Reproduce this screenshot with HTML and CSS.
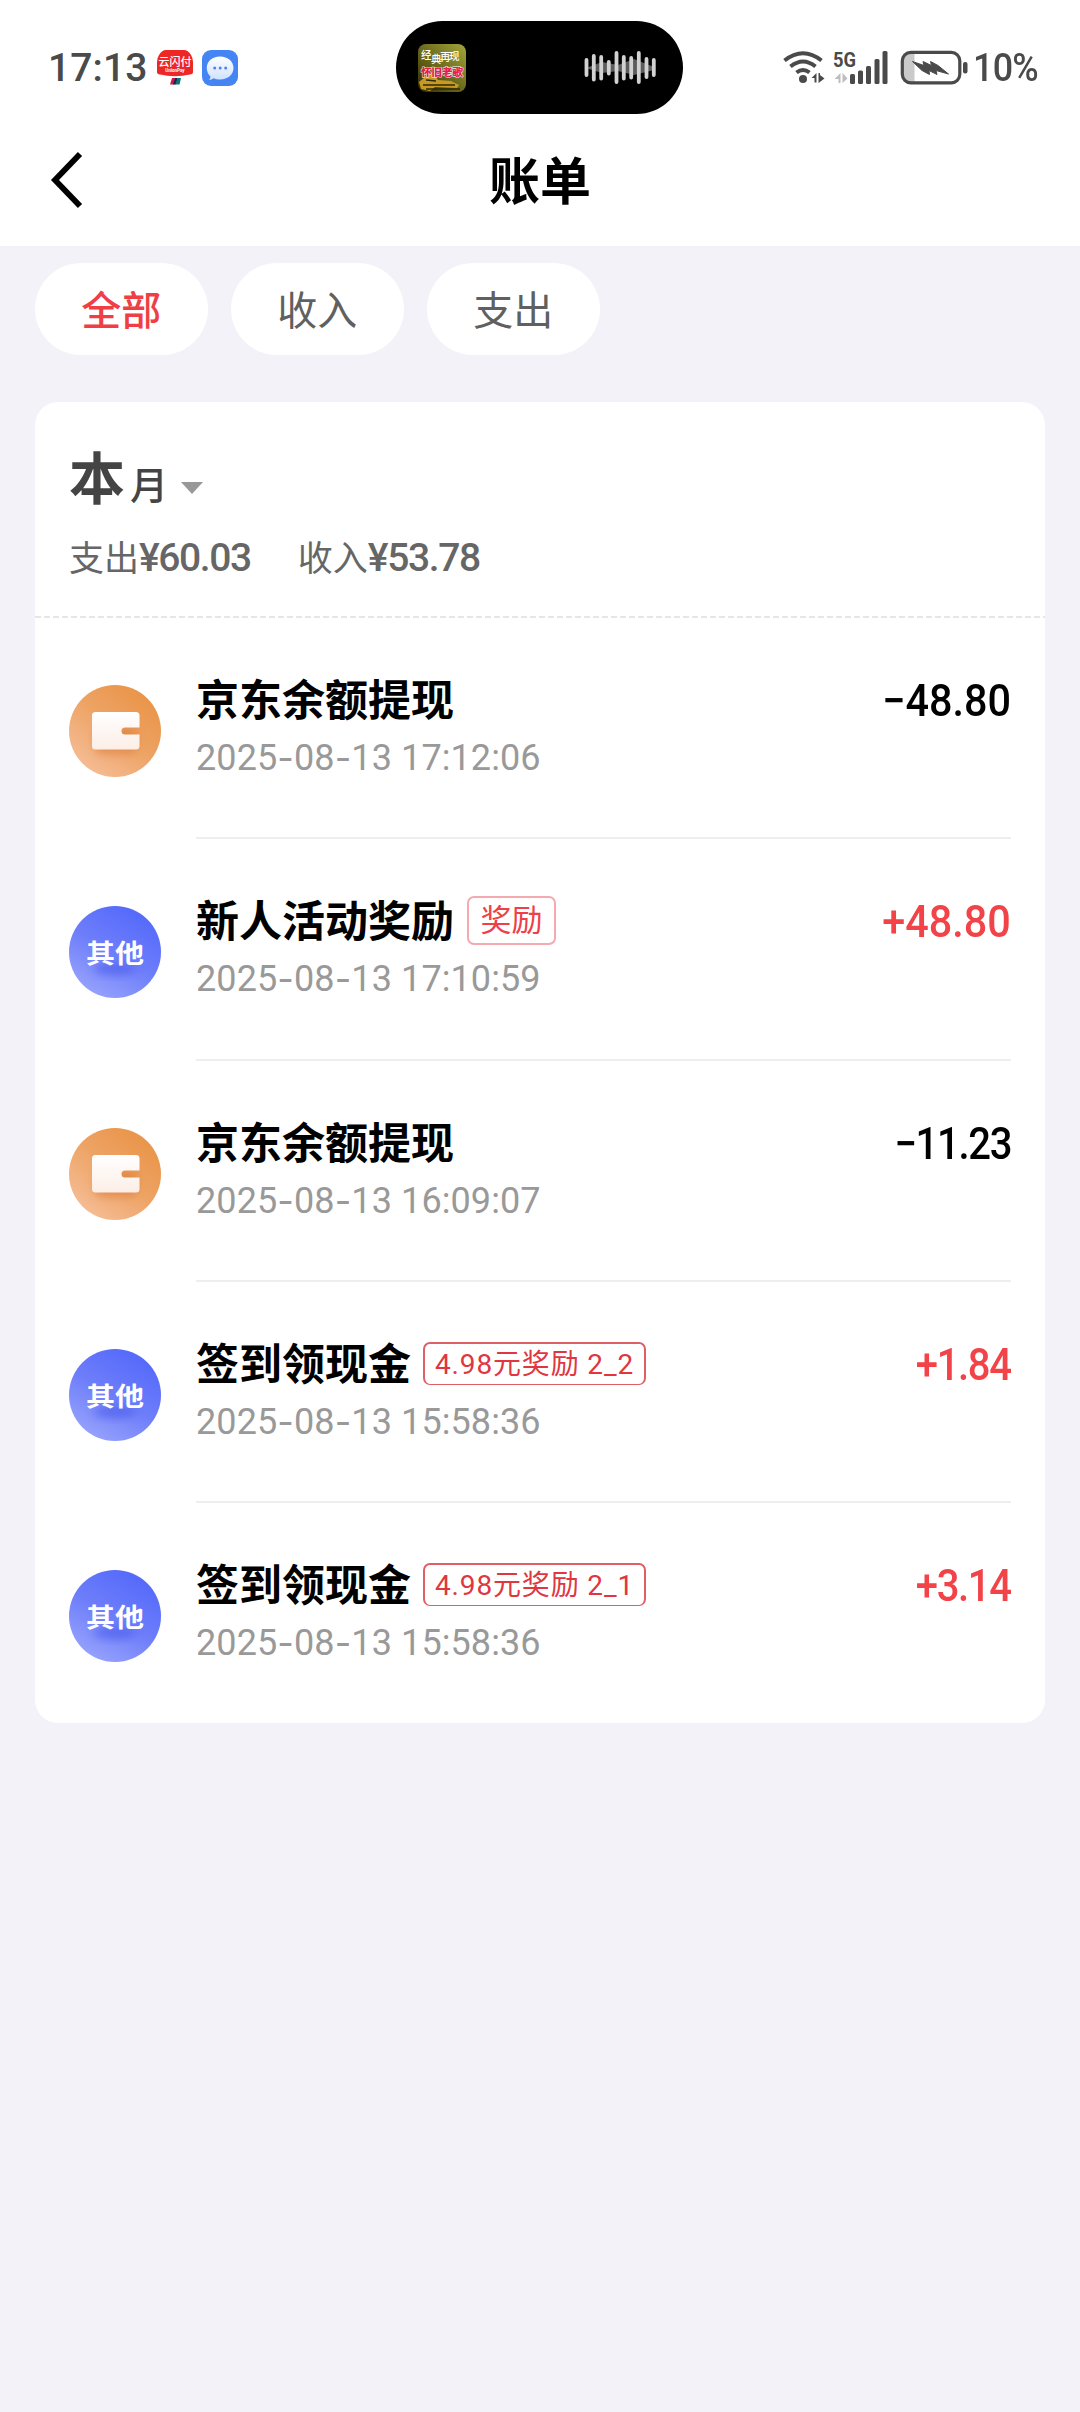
FILE: index.html
```html
<!DOCTYPE html>
<html lang="zh-CN">
<head>
<meta charset="utf-8">
<title>账单</title>
<link rel="stylesheet" href="styles.css">
</head>
<body>
<svg class="defs" width="0" height="0" aria-hidden="true">
  <defs>
    <linearGradient id="orange" x1=".85" y1=".1" x2=".15" y2=".95"><stop offset="0" stop-color="#ea9448"/><stop offset=".45" stop-color="#eda364"/><stop offset="1" stop-color="#f6be98"/></linearGradient>
    <linearGradient id="blue" x1=".75" y1=".1" x2=".25" y2=".95"><stop offset="0" stop-color="#566bfa"/><stop offset=".5" stop-color="#6e7efa"/><stop offset="1" stop-color="#95a1fc"/></linearGradient>
    <linearGradient id="paper" x1="0" y1="0" x2="0" y2="1"><stop offset="0" stop-color="#fff"/><stop offset="1" stop-color="#fceee6"/></linearGradient>
    <linearGradient id="cover" x1="0" y1="1" x2="1" y2="0"><stop offset="0" stop-color="#2c2a08"/><stop offset=".35" stop-color="#5c5a14"/><stop offset="1" stop-color="#a3a63a"/></linearGradient>
    <linearGradient id="bubble" x1="0" y1="0" x2="0" y2="1"><stop offset="0" stop-color="#fff"/><stop offset="1" stop-color="#cfe1ff"/></linearGradient>
    <filter id="soft" x="-50%" y="-50%" width="200%" height="200%"><feGaussianBlur stdDeviation="4"/></filter>
    <symbol id="wallet" viewBox="0 0 92 92">
      <circle cx="46" cy="46" r="46" fill="url(#orange)"/>
      <rect x="26" y="42" width="42" height="27" rx="6" fill="#dd7c38" opacity=".6" filter="url(#soft)"/>
      <path d="M26 27H67Q70.500 27 70.500 30.500V42.500H56A3.500 3.500 0 0 0 56 49.500H70.500V61Q70.500 64.500 67 64.500H26.500Q23 64.500 23 61V30.500Q23 27 26.500 27Z" fill="url(#paper)"/>
    </symbol>
    <symbol id="other" viewBox="0 0 92 92">
      <circle cx="46" cy="46" r="46" fill="url(#blue)"/>
      <ellipse cx="46" cy="63" rx="21" ry="6" fill="#4556e8" opacity=".6" filter="url(#soft)"/>
      <text class="other-text" transform="translate(46 57) scale(1 .9)" text-anchor="middle">其他</text>
    </symbol>
  </defs>
</svg>

<header class="top">
  <div class="status">
    <div class="status-left">
      <span class="clock">17:13</span>
      <svg class="pay" width="36" height="36" viewBox="0 0 36 36">
        <path d="M9 0H27Q31 0 34 5Q36 8 36 12V22Q36 24 33 24.500Q18 28 3 24.500Q0 24 0 22V12Q0 8 2 5Q5 0 9 0Z" fill="#ed2725"/>
        <path d="M15 28H19L17.500 34.500H13Z" fill="#d5164e"/><path d="M18 28H21L19 34.500H16Z" fill="#172c55"/><path d="M20.500 28H24L22.500 34.500H18.500Z" fill="#08777a"/>
        <text x="18" y="15.500" class="pay-name" text-anchor="middle">云闪付</text>
        <text x="18" y="21.500" class="pay-sub" text-anchor="middle">UnionPay</text>
      </svg>
      <svg class="chat" width="36" height="36" viewBox="0 0 36 36">
        <rect width="36" height="36" rx="9" fill="#4585f3"/>
        <path d="M18 6.500C26 6.500 31.500 11.500 31.500 18S26 29.500 18 29.500Q14 29.500 11.500 28.300Q9.500 30 7 30Q8.500 28.500 8.500 26.500Q4.800 23 4.800 18C4.800 11.500 10 6.500 18 6.500Z" fill="url(#bubble)"/>
        <g fill="#4585f3"><circle cx="12.700" cy="18" r="1.500"/><circle cx="18.200" cy="18" r="1.500"/><circle cx="23.700" cy="18" r="1.500"/></g>
      </svg>
    </div>
    <div class="island">
      <svg width="48" height="48" viewBox="0 0 48 48">
        <rect width="48" height="48" rx="8" fill="url(#cover)"/>
        <path d="M1 38L6 34L10 28L17 31L20 36L33 37L41 41L39 44L17 43L12 47L3 45Z" fill="#c99a23"/>
        <path d="M5 41H37M8 45H42M8 36L18 37" stroke="#302a08" stroke-width="1.500"/>
        <g class="cover-top"><text x="3" y="15">经</text><text x="13" y="19">典</text><text x="22" y="17">再</text><text x="31" y="16">现</text></g>
        <text class="cover-song" x="3" y="32">怀旧老歌</text>
      </svg>
      <svg width="72" height="34" viewBox="0 0 72 34">
        <path d="M2 17L18 11L34 14L50 8L70 16V19L50 24L34 20L18 22Z" fill="#5c5c5c"/>
        <path d="M2.500 9V24M9.800 5V28.500M17.200 6V27.500M24.800 11V22.500M32.500 2V31M39.800 6V27.500M47.200 7V26.500M54.800 2V31M62.500 8V26M69.800 9V24" stroke="#d2d2d2" stroke-width="3.800" stroke-linecap="round"/>
      </svg>
    </div>
    <div class="status-right">
      <svg width="190" height="36" viewBox="0 0 190 36">
        <g fill="none" stroke="#4a4a4a" stroke-width="4">
          <path d="M1.500 10.500Q20 -4 38.500 10.500"/><path d="M7.500 16.500Q20 6.500 32.500 16.500"/><path d="M13.500 22.500Q20 17.500 26.500 22.500"/>
        </g>
        <circle cx="20" cy="29" r="4" fill="#4a4a4a"/>
        <path d="M33.500 23V32.500H31.500V28L28.500 28ZM35.500 33V23H37V25L41.500 28.500Z" fill="#4a4a4a"/>
        <text class="net" x="50" y="16.500" textLength="23" lengthAdjust="spacingAndGlyphs">5G</text>
        <path d="M57.500 23V33H55.500V29L51.500 29ZM59.500 33V23L64.500 28.500Z" fill="#bdbdbd"/>
        <g fill="#4a4a4a"><rect x="67" y="24" width="5" height="10" rx="1.500"/><rect x="75" y="20.500" width="5" height="13.500" rx="1.500"/><rect x="83" y="16" width="5" height="18" rx="1.500"/><rect x="91.500" y="9" width="5" height="25" rx="1.500"/><rect x="99.500" y="1" width="5" height="33" rx="1.500"/></g>
        <path d="M127 3H131.500V32H127Q120 32 120 25V10Q120 3 127 3Z" fill="#cacaca"/>
        <rect x="119.300" y="2.300" width="57.500" height="30.500" rx="8.500" fill="none" stroke="#4a4a4a" stroke-width="3.200"/>
        <path d="M129.500 11.500L141 15.500L140 11.500L148.500 15.500L147.500 11.500L155 15.500L165.500 24L153 20.500L154 24.500L146 20.500L146.500 24.500L139 20.500Z" fill="#4a4a4a" stroke="#4a4a4a"/>
        <rect x="180" y="12" width="4.500" height="11.500" rx="2" fill="#4a4a4a"/>
      </svg>
      <span class="percent">10%</span>
    </div>
  </div>
  <nav class="nav">
    <svg class="back" width="34" height="56" viewBox="0 0 34 56"><path d="M30 2L5 28L30 54" fill="none" stroke="#000" stroke-width="5.800"/></svg>
    <h1>账单</h1>
  </nav>
</header>

<main>
  <div class="chips">
    <button class="chip active">全部</button>
    <button class="chip">收入</button>
    <button class="chip">支出</button>
  </div>

  <section class="card">
    <div class="summary">
      <div class="month"><strong>本</strong><span>月</span><i class="caret"></i></div>
      <div class="totals">
        <span class="total">支出<b>¥60.03</b></span>
        <span class="total">收入<b>¥53.78</b></span>
      </div>
    </div>

    <ul class="list">
      <li class="row">
        <svg class="icon"><use href="#wallet"/></svg>
        <div class="body">
          <div class="line"><h2>京东余额提现</h2><span class="amount">−48.80</span></div>
          <time>2025<i>-</i>08<i>-</i>13 17:12:06</time>
        </div>
      </li>
      <li class="row">
        <svg class="icon"><use href="#other"/></svg>
        <div class="body">
          <div class="line"><h2>新人活动奖励</h2><span class="tag">奖励</span><span class="amount plus">+48.80</span></div>
          <time>2025<i>-</i>08<i>-</i>13 17:10:59</time>
        </div>
      </li>
      <li class="row">
        <svg class="icon"><use href="#wallet"/></svg>
        <div class="body">
          <div class="line"><h2>京东余额提现</h2><span class="amount tight">−11.23</span></div>
          <time>2025<i>-</i>08<i>-</i>13 16:09:07</time>
        </div>
      </li>
      <li class="row">
        <svg class="icon"><use href="#other"/></svg>
        <div class="body">
          <div class="line"><h2>签到领现金</h2><span class="tag wide">4.98元奖励 2_2</span><span class="amount plus tight">+1.84</span></div>
          <time>2025<i>-</i>08<i>-</i>13 15:58:36</time>
        </div>
      </li>
      <li class="row">
        <svg class="icon"><use href="#other"/></svg>
        <div class="body">
          <div class="line"><h2>签到领现金</h2><span class="tag wide">4.98元奖励 2_1</span><span class="amount plus tight">+3.14</span></div>
          <time>2025<i>-</i>08<i>-</i>13 15:58:36</time>
        </div>
      </li>
    </ul>
  </section>
</main>
</body>
</html>
```
FILE: styles.css
```css
* { box-sizing: border-box; margin: 0; padding: 0; }
body {
  width: 1080px;
  min-height: 2412px;
  background: #f3f2f8;
  font-family: Roboto, "Noto Sans CJK SC", sans-serif;
  color: #000;
}
svg { display: block; flex: none; overflow: visible; }
.defs { position: absolute; }

.top { height: 246px; background: #fff; }
.status {
  display: grid;
  grid-template-columns: 396px 287px 1fr;
  height: 135px;
  padding-top: 21px;
  color: #4a4a4a;
}
.status-left { display: flex; align-items: center; height: 93px; padding-left: 48px; }
.clock { width: 109px; padding-top: 1px; font-size: 39px; font-weight: 500; line-height: 40px; letter-spacing: .1px; }
.chat { margin-left: 9px; }
.pay-name { font: 500 11px "Noto Sans CJK SC", sans-serif; fill: #fff; }
.pay-sub { font: 700 4.500px Roboto, sans-serif; fill: #fff; }
.island {
  display: flex;
  align-items: center;
  justify-content: space-between;
  height: 93px;
  padding: 0 27px 0 22px;
  border-radius: 47px;
  background: #000;
}
.cover-top { font: 500 10.500px "Noto Sans CJK SC", sans-serif; fill: #fff; }
.cover-song { font: 900 10.500px "Noto Sans CJK SC", sans-serif; fill: #e3204b; stroke: #fff; stroke-width: .9px; paint-order: stroke; }
.status-right { display: flex; align-items: center; height: 93px; padding-left: 100px; }
.net { font: 700 21px Roboto, sans-serif; fill: #4a4a4a; }
.percent { padding-top: 1px; font-size: 39px; font-weight: 500; letter-spacing: -.8px; line-height: 40px; white-space: nowrap; transform: scaleX(.92); transform-origin: left; }

.nav {
  display: grid;
  grid-template-columns: 120px 1fr 120px;
  align-items: center;
  height: 90px;
}
.back { margin-left: 50px; }
h1 { padding-top: 6px; text-align: center; font-size: 51px; font-weight: 700; line-height: 60px; }

main { padding: 17px 35px 0; }
.chips { display: flex; gap: 23.500px; }
.chip {
  width: 172.500px;
  height: 92px;
  padding-top: 5px;
  border: 0;
  border-radius: 46px;
  background: #fff;
  color: #606060;
  font: 400 40px/87px Roboto, "Noto Sans CJK SC", sans-serif;
}
.chip.active { color: #f03e45; font-weight: 500; }

.card { height: 1321px; margin-top: 47px; border-radius: 23px; background: #fff; }
.summary {
  height: 216px;
  padding: 43px 34px 0;
  background: repeating-linear-gradient(90deg, #e6e6e6 0 6px, transparent 6px 9px) 0 100% / 100% 2px no-repeat;
}
.month { display: flex; align-items: baseline; height: 74px; line-height: 70px; color: #444; }
.month strong { font-size: 56px; font-weight: 700; }
.month span { margin-left: 5px; font-size: 38px; font-weight: 500; }
.caret { margin-left: 13px; align-self: center; margin-top: 11px; border: 11px solid transparent; border-top: 12px solid #989898; border-bottom: 0; }
.totals { display: flex; gap: 47px; margin-top: 18px; font-size: 35px; line-height: 42px; color: #666; }
.total b { font-size: 39px; font-weight: 500; letter-spacing: -1.400px; }

.list { list-style: none; }
.row { display: flex; height: 221.300px; padding: 0 34px; }
.icon { width: 92px; height: 92px; margin: 67px 35px 0 0; }
.other-text { font: 700 29px "Noto Sans CJK SC", sans-serif; fill: #fff; }
.body { flex: 1; padding-top: 53px; border-bottom: 2px solid #eee; }
.row:last-child .body { border-bottom: 0; }
.line { display: flex; align-items: center; height: 60px; }
h2 { font-size: 43px; font-weight: 700; line-height: 60px; white-space: nowrap; }
.tag {
  height: 49px;
  margin: -3px 0 0 13px;
  padding: 0 11.500px;
  border: 2px solid #f6a9ae;
  border-radius: 7px;
  color: #ee4048;
  font-size: 31px;
  line-height: 45px;
  white-space: nowrap;
}
.tag.wide {
  width: 223px;
  height: 43px;
  margin-left: 12px;
  padding: 0 10px;
  border-color: #df5f66;
  border-width: 2px 2px 1px;
  color: #e0363f;
  font-size: 28px;
  line-height: 41px;
  letter-spacing: .85px;
}
.amount { margin-left: auto; font-size: 45px; font-weight: 500; line-height: 60px; transform: scaleX(.92); transform-origin: right; }
.amount.tight { letter-spacing: -1.500px; transform: scaleX(.89); }
.plus { color: #f24349; }
time { display: block; height: 52px; font-size: 36px; line-height: 55px; letter-spacing: .1px; color: #999; white-space: nowrap; }
time i { font-family: Inter, sans-serif; font-style: normal; line-height: 1; vertical-align: -1px; }
```
